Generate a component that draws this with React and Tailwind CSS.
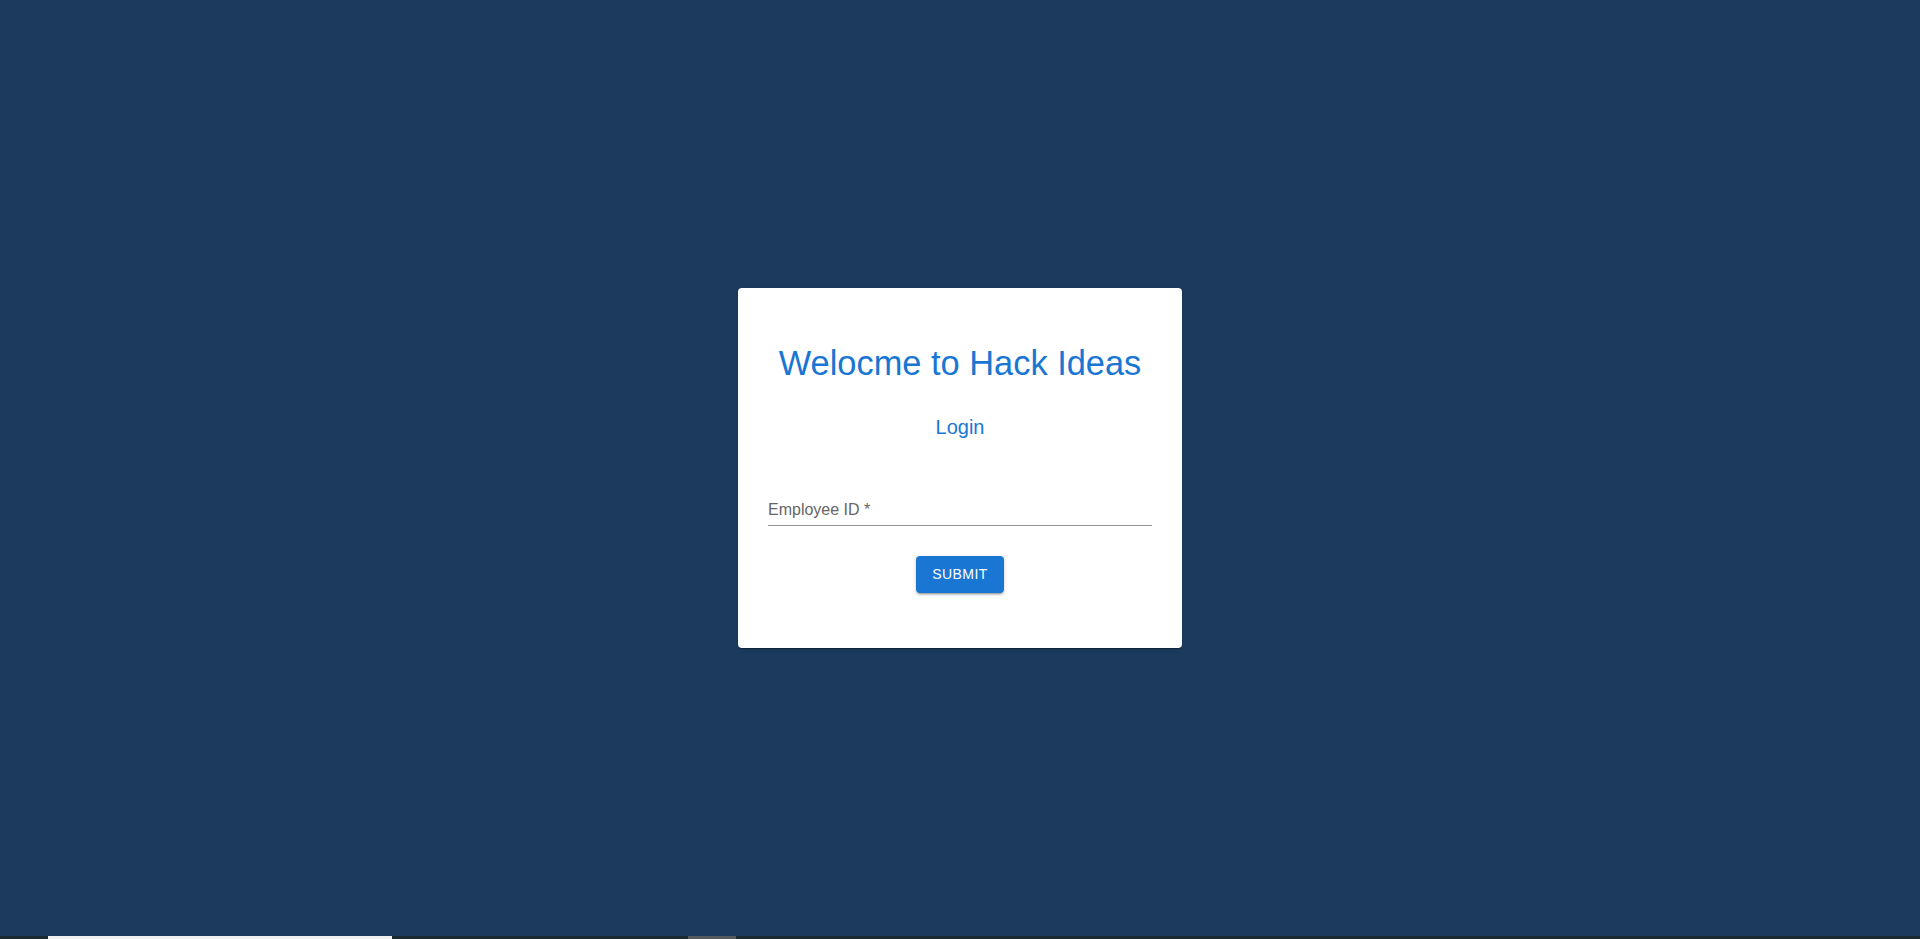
export default function App() {
  return (
    <div className="w-[1920px] h-[939px] flex flex-col bg-[#1b3a5e] overflow-hidden" style={{ fontFamily: '"Liberation Sans", Arial, sans-serif' }}>
      <div className="h-[936px] flex items-center justify-center">
        <div className="w-[444px] h-[360px] bg-white rounded-[4px] shadow-[0_2px_1px_-1px_rgba(0,0,0,0.2),0_1px_1px_0_rgba(0,0,0,0.14),0_1px_3px_0_rgba(0,0,0,0.12)] px-[30px] pt-[54px] flex flex-col items-center">
          <h1 className="text-[34.4px] leading-[42px] text-[#1976d2] font-normal">Welocme to Hack Ideas</h1>
          <h2 className="mt-[27px] text-[20px] leading-[32px] text-[#1976d2] font-normal">Login</h2>
          <div className="mt-[56px] w-full border-b border-[#949494] pb-[4px]">
            <div className="text-[16px] leading-[22px] text-[#666666]">Employee ID *</div>
          </div>
          <button className="mt-[30px] w-[88px] h-[37px] rounded-[4px] bg-[#1976d2] text-white text-[14px] tracking-[0.4px] uppercase shadow-[0_3px_1px_-2px_rgba(0,0,0,0.2),0_2px_2px_0_rgba(0,0,0,0.14),0_1px_5px_0_rgba(0,0,0,0.12)]">
            Submit
          </button>
        </div>
      </div>
      <div className="h-[3px] bg-[#1b2a30] relative">
        <div className="absolute left-[48px] w-[344px] top-0 h-[3px] bg-[#f0f0f0]" />
        <div className="absolute left-[688px] w-[48px] top-0 h-[3px] bg-[#555a5e]" />
      </div>
    </div>
  );
}
